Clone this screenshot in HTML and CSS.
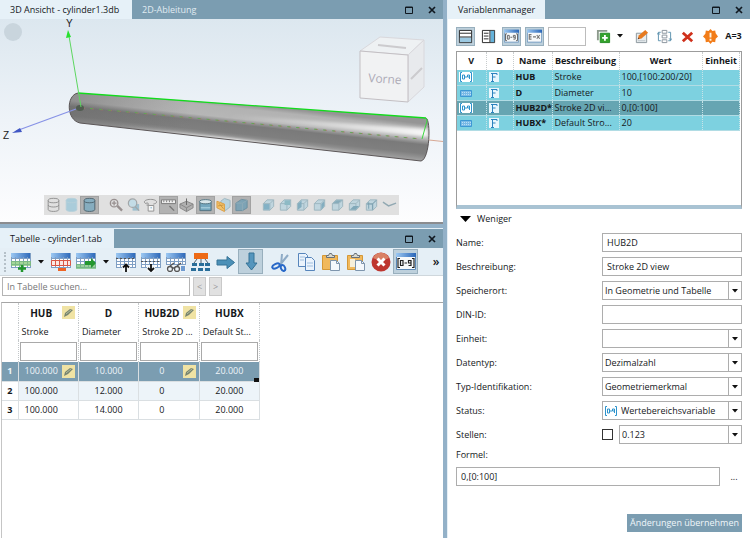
FILE: index.html
```html
<!DOCTYPE html>
<html lang="de">
<head>
<meta charset="utf-8">
<title>Variablenmanager</title>
<link rel="stylesheet" href="styles.css">
</head>
<body>
<svg class="defs" aria-hidden="true">
  <defs>
    <linearGradient id="gTab" x1="0" y1="0" x2="1" y2="0"><stop offset="0" stop-color="#9cc8f2"/><stop offset="1" stop-color="#2a66b8"/></linearGradient>
    <symbol id="grid" viewBox="0 0 20 20">
      <path fill="#fff" d="M0 1h20v15H0z"/><path fill="url(#gTab)" d="M0 1h20v5H0z"/>
      <path fill="none" stroke="#7f9fc4" d="M.5 5v11M4.5 5v11M8.5 5v11M12.5 5v11M16.5 5v11M19.5 1v15M0 6.500h20M0 9.500h20M0 12.500h20M0 15.500h20"/>
    </symbol>
    <symbol id="max" viewBox="0 0 8 8"><path fill="none" stroke="#101820" d="M.5 1h7v6.500h-7zM0 1.500h8"/></symbol>
    <symbol id="close" viewBox="0 0 8 8"><path fill="none" stroke="#101820" stroke-width="1.700" d="M1 1l6 6M7 1L1 7"/></symbol>
    <symbol id="pencil" viewBox="0 0 13 13">
      <path fill="#f0e3a4" d="M0 0h13v13H0z"/><path fill="#77846f" d="M2 11l1-4 5-4 3 1-5 5z"/><path stroke="#b5bd9c" d="M4 8l5-4"/>
    </symbol>
    <symbol id="range" viewBox="0 0 14 10">
      <path fill="#fff" d="M0 0h14v10H0z"/>
      <path fill="none" stroke="#2d93cc" d="M3 .5H1.500v9H3M11 .5h1.500v9H11M3.500 3h2v4h-2zM6 5h2M10.500 7V3h-2v2h2"/>
    </symbol>
    <symbol id="fixed" viewBox="0 0 14 10"><path fill="#79b9e6" stroke="#3d98d4" d="M1.500 2.500h11v6h-11z"/><path stroke="#b9def5" stroke-dasharray="1 1" d="M3 4.500h9M3 6.500h9"/></symbol>
    <symbol id="efix" viewBox="0 0 10 10"><path fill="#e8f6fd" d="M0 0h10v10H0z"/><path fill="none" stroke="#2c83bf" d="M2 9.500h3M3.500 9V1.500M2 1.500h6V3M3.500 5h3"/></symbol>
    <symbol id="cyl" viewBox="0 0 16 18"><path d="M2 4v10c0 3 12 3 12 0V4"/><ellipse cx="8" cy="4" rx="6" ry="2.500"/></symbol>
    <symbol id="cube" viewBox="0 0 16 16"><path fill="#bfd5de" stroke="#9db5bf" d="M2.500 6.500l4-4h7v7l-4 4h-7zM2.500 6.500h7v7M9.500 6.500l4-4"/></symbol>
    <symbol id="paste" viewBox="0 0 20 20">
      <path fill="#f1b95c" stroke="#d59836" d="M1.500 3.500h15v14h-15z"/><path fill="#d9d9cf" stroke="#66707a" d="M5.500 5.500v-2h2l1-2h2l1 2h2v2z"/>
      <path fill="#f4f8fc" stroke="#7e95ad" d="M9.500 8.500h6l3 3v7h-9z"/><path fill="none" stroke="#7e95ad" d="M15.500 8.500v3h3"/>
    </symbol>
    <symbol id="win" viewBox="0 0 20 20">
      <path fill="#f7f9fa" stroke="#5b88b7" d="M.5 1.500h19v16H.5z"/><path fill="url(#gTab)" d="M0 1h20v4H0z"/>
    </symbol>
    <symbol id="tri" viewBox="0 0 6 4"><path fill="#111" d="M0 0h6L3 3.500z"/></symbol>
  </defs>
</svg>

<div class="app">
  <div class="left">
    <section class="panel">
      <header class="tabs">
        <button class="tab on tab-3d">3D Ansicht - cylinder1.3db</button><button class="tab">2D-Ableitung</button>
        <span class="wins"><button aria-label="Maximieren"><svg><use href="#max"/></svg></button><button aria-label="Schließen"><svg><use href="#close"/></svg></button></span>
      </header>
      <div class="viewer">
        <svg class="scene" viewBox="0 19 443 203" role="img" aria-label="Zylinder">
          <defs>
            <linearGradient id="sky" x1="0" y1="0" x2="0" y2="1"><stop offset="0" stop-color="#dce7ef"/><stop offset=".5" stop-color="#eef3f8"/><stop offset="1" stop-color="#fdfdfe"/></linearGradient>
            <linearGradient id="body" gradientUnits="userSpaceOnUse" x1="250" y1="105" x2="246" y2="142">
              <stop offset="0" stop-color="#959595"/><stop offset=".12" stop-color="#b2b2b2"/><stop offset=".4" stop-color="#b6b6b6"/><stop offset=".56" stop-color="#7a7a7a"/><stop offset=".8" stop-color="#7f7f7f"/><stop offset="1" stop-color="#a2a2a2"/>
            </linearGradient>
            <linearGradient id="fade" gradientUnits="userSpaceOnUse" x1="230" y1="0" x2="427" y2="0"><stop offset="0" stop-color="#fff" stop-opacity="0"/><stop offset="1" stop-color="#fff" stop-opacity=".9"/></linearGradient>
            <linearGradient id="low" gradientUnits="userSpaceOnUse" x1="120" y1="0" x2="370" y2="0"><stop offset="0" stop-color="#fff" stop-opacity="0"/><stop offset=".45" stop-color="#fff"/><stop offset="1" stop-color="#fff" stop-opacity="0"/></linearGradient>
            <linearGradient id="end" gradientUnits="userSpaceOnUse" x1="69" y1="0" x2="190" y2="0"><stop offset="0" stop-color="#686868" stop-opacity=".5"/><stop offset="1" stop-color="#686868" stop-opacity="0"/></linearGradient>
            <filter id="soft" x="-5%" y="-30%" width="110%" height="160%"><feGaussianBlur stdDeviation="1.500"/></filter>
            <clipPath id="cyclip"><path d="M78 93C66 95 66 120 80 123L421 161C430 159 431 120 426 118z"/></clipPath>
          </defs>
          <path fill="url(#sky)" d="M0 19h443v203H0z"/>
          <circle cx="13" cy="32" r="9" fill="#c9d5dd"/>
          <g stroke="#d9d8dc" fill="#eef1f3">
            <path d="M360 51l20-14 44 3-16 15z"/><path fill="#e8eaed" d="M408 55l16-15v47l-16 15z"/><path stroke="#c3bfc3" fill="#f1f2f3" d="M360 51l48 4v47l-48-4z"/>
            <path stroke="#cccbce" stroke-width="2" d="M378 45l28 3M411 79l11-11"/>
          </g>
          <text x="368" y="82" transform="rotate(4 368 82)" class="face">Vorne</text>
          <g clip-path="url(#cyclip)">
            <path fill="url(#body)" d="M60 85h380v85H60z"/>
            <path fill="url(#end)" d="M60 85h130v60H60z"/>
            <path filter="url(#soft)" fill="url(#fade)" d="M230 115L428 129v8L230 118z"/>
            <path filter="url(#soft)" fill="url(#low)" d="M120 126L370 154v5L120 131z"/>
          </g>
          <path fill="none" stroke="#5c5758" d="M78 93C66 95 66 120 80 123L421 161C430 159 431 120 426 118"/>
          <path fill="none" stroke="#12db1c" stroke-width="1.300" d="M78 93l348 25"/><path fill="none" stroke="#3bd93f" d="M426 118l1 3-5 18"/>
          <path fill="none" stroke="#b46c64" stroke-dasharray="3 6" opacity=".7" d="M82 108l339 31"/><path fill="none" stroke="#55ae4f" stroke-dasharray="3 6" stroke-dashoffset="4" opacity=".8" d="M85 108l336 31"/>
          <path stroke="#d7a894" d="M429 140l14 1.500"/>
          <ellipse cx="80" cy="108" rx="4" ry="3" fill="#505c50"/>
          <path stroke="#5dd760" d="M81 107L69 36"/><path fill="#27e12f" d="M68 30l-2 8 5-1z"/>
          <path stroke="#8792e6" stroke-width="1.300" d="M76 109l-60 22"/><path fill="#4057c4" d="M12 133l8-5 2 4z"/>
          <text x="66" y="27" class="axis">Y</text><text x="3" y="139" class="axis">Z</text>
        </svg>
        <div class="viewbar">
          <button aria-label="Drahtmodell"><svg viewBox="0 0 16 18" fill="none" stroke="#8b8b8b"><use href="#cyl"/><path d="M2 9c0 3 12 3 12 0"/></svg></button>
          <button aria-label="Schattiert"><svg viewBox="0 0 16 18" fill="#a9ccda" stroke="#b6d0da"><use href="#cyl"/></svg></button>
          <button class="down" aria-label="Schattiert mit Kanten"><svg viewBox="0 0 16 18" fill="#86adbf" stroke="#4b5f69"><use href="#cyl"/></svg></button>
          <i></i>
          <button aria-label="Alles zoomen"><svg viewBox="0 0 16 16" fill="none" stroke="#989090" stroke-width="1.400"><circle cx="6.500" cy="6" r="4"/><path d="M4 6h5M6.500 3.500v5"/><path stroke-width="2.500" d="M10 9l5 5"/></svg></button>
          <button aria-label="Bereich zoomen"><svg viewBox="0 0 16 16" fill="#c3dce6" stroke="#a2a6a8" stroke-width="1.300"><path fill="#9dbfce" stroke="none" d="M7 7h7v7H7z"/><circle cx="7" cy="6" r="4.500"/><path d="M10 10l4 4"/></svg></button>
          <button aria-label="Drehen"><svg viewBox="0 0 16 16" fill="#f7f7f7" stroke="#8f8f8f"><path fill="none" d="M5 7C-1 6 1 2 8 2s9 4 3 5M4 5l2 2-2 2"/><path d="M5.500 8.500h6v6h-6z"/><path stroke="#6ca7c9" d="M8 11h1.500"/></svg></button>
          <button class="down" aria-label="Messen"><svg viewBox="0 0 16 16" fill="#eee" stroke="#777"><path d="M.5 2.500h15v4H.5zM3 3v2M6 3v2M9 3v2M12 3v2"/><path stroke-width="1.500" d="M9 9l5 5"/></svg></button>
          <button aria-label="Schnitt"><svg viewBox="0 0 16 16" fill="#b0b0b0" stroke="#858585"><path d="M1 7l7-3 7 3v4l-7 4-7-4z"/><path fill="none" d="M1 7l7 4 7-4M8 11v4"/><path d="M8 1v7" stroke="#666"/></svg></button>
          <button class="down" aria-label="Maße"><svg viewBox="0 0 16 16" fill="#75a8bf" stroke="#51717f"><path d="M2 5h12v9H2z"/><path fill="#d8e6ea" d="M1.500 4.500c0-3 13-3 13 0s-13 3-13 0"/><path fill="none" stroke="#b9dce8" d="M3 11h10"/></svg></button>
          <button aria-label="Textur"><svg viewBox="0 0 16 16" fill="#b8d3de" stroke="#9db5bf"><path d="M5 4l4-3 6 2v7l-5 4z"/><path fill="#f2c168" stroke="#db9d43" d="M1 4l8 3v8l-8-4z"/><path stroke="#c9943f" d="M2 9l6-1M3 6l5 6"/></svg></button>
          <button class="down" aria-label="Körper"><svg viewBox="0 0 16 16" fill="#7da3b5" stroke="#6c8f9f"><path d="M2 6l6-4 6 1v8l-5 3H2z"/><path fill="none" stroke="#8eabb8" d="M2 6h7l5-3M9 6v8"/></svg></button>
          <i></i>
          <button aria-label="Ansicht vorne"><svg viewBox="0 0 16 16"><use href="#cube"/><path fill="#83b1c5" d="M3 7h6v6H3z"/></svg></button>
          <button aria-label="Ansicht hinten"><svg viewBox="0 0 16 16"><use href="#cube"/><path fill="#8dbac5" d="M7 3h6v5H7z"/></svg></button>
          <button aria-label="Ansicht links"><svg viewBox="0 0 16 16"><use href="#cube"/><path fill="#83adbf" d="M3 7l4-4v7l-4 3z"/></svg></button>
          <button aria-label="Ansicht rechts"><svg viewBox="0 0 16 16"><use href="#cube"/><path fill="#83adbf" d="M10 7l3-3v5l-3 4z"/></svg></button>
          <button aria-label="Ansicht oben"><svg viewBox="0 0 16 16"><use href="#cube"/><path fill="#87acbb" d="M3 6l4-3h6L9 6z"/></svg></button>
          <button aria-label="Ansicht unten"><svg viewBox="0 0 16 16"><use href="#cube"/><path fill="#80a8b9" d="M3 13l4-4h6l-4 4z"/></svg></button>
          <button aria-label="Isometrie"><svg viewBox="0 0 16 16"><use href="#cube"/><path fill="none" stroke="#7a9fb0" d="M3 7h6v6M9 7l4-4M5 5v7"/></svg></button>
          <button aria-label="Mehr"><svg viewBox="0 0 16 16" fill="none" stroke="#91a8b2" stroke-width="1.500"><path d="M1 5l6 4 8-3"/></svg></button>
        </div>
      </div>
    </section>

    <section class="panel tablepanel">
      <header class="tabs">
        <button class="tab on tab-table">Tabelle - cylinder1.tab</button>
        <span class="wins"><button aria-label="Maximieren"><svg><use href="#max"/></svg></button><button aria-label="Schließen"><svg><use href="#close"/></svg></button></span>
      </header>
      <div class="bar">
        <span class="grip"></span>
        <button aria-label="Zeile hinzufügen"><svg viewBox="0 0 20 20"><use href="#grid"/><path fill="#7cc56c" opacity=".7" d="M0 9h20v5H0z"/><path fill="none" stroke="#23962e" stroke-width="2.500" d="M11 13v7M7 16.500h8"/></svg></button>
        <button class="drop" aria-label="Weitere"><svg><use href="#tri"/></svg></button>
        <button aria-label="Zeile löschen"><svg viewBox="0 0 20 20"><use href="#grid"/><path fill="#fbe9e4" stroke="#d95745" d="M.5 8.500h19v5H.5zM4.500 9v4M8.500 9v4M12.500 9v4M16.500 9v4"/><path stroke="#ef6423" stroke-width="3" d="M7 17.500h8"/></svg></button>
        <button aria-label="Zeile kopieren"><svg viewBox="0 0 20 20"><use href="#grid"/><path fill="#6fbd71" opacity=".7" d="M0 12h20v5H0z"/><path fill="#23962e" d="M9 9h6V6l5 5-5 5v-3H9z"/></svg></button>
        <button class="drop" aria-label="Weitere"><svg><use href="#tri"/></svg></button>
        <button aria-label="Zeile nach oben"><svg viewBox="0 0 20 20"><use href="#grid"/><path fill="#f2f7fa" d="M6 13h8v7H6z"/><path stroke="#555" stroke-dasharray="2 2" d="M0 6.500h20"/><path fill="none" stroke="#111" stroke-width="1.800" d="M10 20v-7M7 15.500l3-3 3 3"/></svg></button>
        <button aria-label="Zeile nach unten"><svg viewBox="0 0 20 20"><use href="#grid"/><path fill="#f2f7fa" d="M6 13h8v7H6z"/><path stroke="#555" stroke-dasharray="2 2" d="M0 9.500h20"/><path fill="none" stroke="#111" stroke-width="1.800" d="M10 12v7M7 16l3 3 3-3"/></svg></button>
        <button aria-label="Ansehen"><svg viewBox="0 0 20 20"><use href="#grid"/><path fill="#eef4f8" d="M0 13h20v7H0z"/><g fill="none" stroke="#555" stroke-width="1.300"><circle cx="4" cy="17" r="2.500"/><circle cx="11" cy="17" r="2.500"/><path d="M4 14l4-3M11 14l4-3M6 16h3"/></g><path fill="#6f9bd0" d="M15 14h4v5h-4z"/></svg></button>
        <button aria-label="Struktur"><svg viewBox="0 0 20 20"><path fill="#ed6a16" d="M3 1h14v6H3z"/><path fill="none" stroke="#52616c" d="M10 7v4M6 7l-3 4M14 7l3 4"/><path fill="#286d99" d="M1 11h5v3H1zM8 11h5v3H8zM14 11h5v3h-5zM0 16h5v3H0zM7 16h5v3H7zM14 16h5v3h-5z"/></svg></button>
        <button aria-label="Nach rechts"><svg viewBox="0 0 20 20"><path fill="#4c90b7" stroke="#347296" d="M1 8h10V4.500l7.500 6-7.500 6V13H1z"/></svg></button>
        <button class="down" aria-label="Nach unten"><svg viewBox="0 0 20 20"><path fill="#5495bd" stroke="#347296" d="M8 1h5v10h3L10.500 18 5 11h3z"/></svg></button>
        <i></i>
        <button aria-label="Ausschneiden"><svg viewBox="0 0 20 20"><path stroke="#8eabc6" stroke-width="2" d="M11 2l-1 11M17 3L8 14"/><g fill="none" stroke="#2868c8" stroke-width="2"><ellipse cx="5" cy="14" rx="4" ry="2" transform="rotate(-25 5 14)"/><ellipse cx="12" cy="16" rx="2" ry="3" transform="rotate(-25 12 16)"/></g></svg></button>
        <button aria-label="Kopieren"><svg viewBox="0 0 20 20" fill="#eaf3fc" stroke="#5785bb"><path d="M2.500 1.500h7l2 2v11h-9z"/><path d="M9.500 5.500h6l3 3v10h-9z"/><path stroke="#a0bfde" d="M4 5h5M4 8h4M11 11h6M11 14h6"/></svg></button>
        <button aria-label="Einfügen"><svg><use href="#paste"/></svg></button>
        <button aria-label="Einfügen als"><svg viewBox="0 0 20 20"><use href="#paste"/><path fill="#f6efda" d="M4 7h5v8H4z"/></svg></button>
        <button aria-label="Löschen"><svg viewBox="0 0 20 20"><circle cx="10" cy="10" r="9.500" fill="#be3630"/><path fill="#d98165" d="M2 6C5-1 15-1 18 6c-4 2-12 2-16 0"/><path stroke="#fff" stroke-width="3" d="M6.500 6.500l7 7M13.500 6.500l-7 7"/></svg></button>
        <button class="down" aria-label="Wertebereich"><svg viewBox="0 0 20 20"><use href="#win"/><path fill="none" stroke="#222" stroke-width="1.200" d="M4 6.500H2v9h2M16 6.500h2v9h-2M4.500 8.500H7v5H4.500zM8.500 11h2.500M12.500 13.500H15v-5h-2.500V11H15"/></svg></button>
        <button class="more" aria-label="Mehr">»</button>
      </div>
      <div class="search"><input type="text" aria-label="In Tabelle suchen" placeholder="In Tabelle suchen..."><button>&lt;</button><button>&gt;</button></div>
      <div class="sheet">
        <table class="data">
          <thead>
            <tr><th></th><th class="pen">HUB<svg><use href="#pencil"/></svg></th><th>D</th><th class="pen">HUB2D<svg><use href="#pencil"/></svg></th><th>HUBX</th></tr>
            <tr class="desc"><td></td><td>Stroke</td><td>Diameter</td><td>Stroke 2D ...</td><td>Default St...</td></tr>
            <tr class="filter"><td></td><td><input type="text" aria-label="Filter HUB"></td><td><input type="text" aria-label="Filter D"></td><td><input type="text" aria-label="Filter HUB2D"></td><td><input type="text" aria-label="Filter HUBX"></td></tr>
          </thead>
          <tbody>
            <tr class="sel"><th>1</th><td class="pen">100.000<svg><use href="#pencil"/></svg></td><td>10.000</td><td class="pen">0<svg><use href="#pencil"/></svg></td><td class="cursor">20.000</td></tr>
            <tr class="alt"><th>2</th><td class="pen">100.000</td><td>12.000</td><td class="pen">0</td><td>20.000</td></tr>
            <tr><th>3</th><td class="pen">100.000</td><td>14.000</td><td class="pen">0</td><td>20.000</td></tr>
          </tbody>
        </table>
      </div>
    </section>
  </div>

  <section class="panel right">
    <header class="tabs">
      <button class="tab on tab-var">Variablenmanager</button>
      <span class="wins"><button aria-label="Maximieren"><svg><use href="#max"/></svg></button><button aria-label="Schließen"><svg><use href="#close"/></svg></button></span>
    </header>
    <div class="manager">
      <div class="varbar">
        <button class="down" aria-label="Geteilt horizontal"><svg viewBox="0 0 16 16"><path fill="#fff" stroke="#222" d="M1.500 1.500h13v13h-13z"/><path fill="#9cc9e2" d="M2 9h12v5H2z"/><path stroke="#222" d="M2 4.500h12M2 8.500h12"/></svg></button>
        <button aria-label="Geteilt vertikal"><svg viewBox="0 0 16 16"><path fill="#fff" stroke="#222" d="M1.500 1.500h13v13h-13z"/><path fill="#65b2da" d="M10 2h4v12h-4z"/><path stroke="#222" d="M9.500 2v12M3 4.500h5M3 7.500h5M3 10.500h5"/></svg></button>
        <button class="down" aria-label="Wertebereich"><svg viewBox="0 0 20 20"><use href="#win"/><path fill="none" stroke="#666" stroke-width="1.300" d="M4 6.500H2v9h2M16 6.500h2v9h-2M4.500 8.500H7v5H4.500zM8.500 11h2.500M12.500 13.500H15v-5h-2.500V11H15"/></svg></button>
        <button class="down" aria-label="Ausdruck"><svg viewBox="0 0 20 20"><use href="#win"/><path fill="none" stroke="#777" stroke-width="1.500" d="M6 7.500H3v6h3M3 10.500h3M8 10.500h4M13 8l4 5M17 8l-4 5"/></svg></button>
        <input type="text" aria-label="Filter">
        <button class="add" aria-label="Variable hinzufügen"><svg viewBox="0 0 16 16"><path fill="none" stroke="#8d9a8d" stroke-width="2" d="M2 12V2h10"/><path fill="#35a32b" stroke="#238a24" d="M4.500 4.500h10v10h-10z"/><path stroke="#fff" stroke-width="2" d="M9.500 6.500v6M6.500 9.500h6"/></svg></button>
        <button class="drop" aria-label="Weitere"><svg><use href="#tri"/></svg></button>
        <button aria-label="Bearbeiten"><svg viewBox="0 0 16 16"><path fill="#e8edef" stroke="#89949b" d="M2.500 4.500h11v10h-11z"/><path stroke="#bac3c8" d="M4 12.500h8"/><path fill="#e67a20" d="M4 11l1-4 7-6 3 3-7 6z"/><path fill="#544" d="M4 11l.5-2 1.500 1.500z"/></svg></button>
        <button aria-label="Umbenennen"><svg viewBox="0 0 16 16" fill="none" stroke="#5c91ae"><path d="M4 3.500H1.500v9H4M12 3.500h2.500v9H12M0 6l1.500-2L3 6M13 10l1.500 2 1.500-2"/><path stroke="#87919b" d="M5.500 1.500h5v3h-5zM5.500 6.500h5v3h-5zM5.500 11.500h5v3h-5z"/></svg></button>
        <button aria-label="Löschen"><svg viewBox="0 0 16 16" fill="none" stroke="#cf301b" stroke-width="3"><path d="M3 4l10 9M13 4L3 13"/></svg></button>
        <button aria-label="Prüfen"><svg viewBox="0 0 16 16"><path fill="#f27c18" d="M8 0l2 2 3-.5.5 3L16 8l-2.500 2.500-.5 3.500-3-.5L8 16l-2-2.500-3 .5-.5-3.500L0 8l2.500-3L3 1.500 6 2z"/><path stroke="#fff3df" stroke-width="2" d="M8 4v5M8 10.500v2"/></svg></button>
        <button class="txt">A=3</button>
      </div>
      <div class="varlist">
        <table class="vars">
          <colgroup><col class="cv"><col class="cd"><col class="cn"><col class="cb"><col class="cw"><col class="ce"></colgroup>
          <thead><tr><th>V</th><th>D</th><th>Name</th><th>Beschreibung</th><th>Wert</th><th>Einheit</th></tr></thead>
          <tbody>
            <tr><td><svg class="i14"><use href="#range"/></svg></td><td><svg class="i10"><use href="#efix"/></svg></td><th>HUB</th><td>Stroke</td><td>100,[100:200/20]</td><td></td></tr>
            <tr><td><svg class="i14"><use href="#fixed"/></svg></td><td><svg class="i10"><use href="#efix"/></svg></td><th>D</th><td>Diameter</td><td>10</td><td></td></tr>
            <tr class="sel"><td><svg class="i14"><use href="#range"/></svg></td><td><svg class="i10"><use href="#efix"/></svg></td><th>HUB2D*</th><td>Stroke 2D vi...</td><td>0,[0:100]</td><td></td></tr>
            <tr><td><svg class="i14"><use href="#fixed"/></svg></td><td><svg class="i10"><use href="#efix"/></svg></td><th>HUBX*</th><td>Default Stro...</td><td>20</td><td></td></tr>
          </tbody>
        </table>
      </div>
      <button class="less"><svg viewBox="0 0 11 6"><path d="M0 0h11L5.500 6z"/></svg>Weniger</button>
      <form class="form">
        <label for="f1">Name:</label><input id="f1" type="text" value="HUB2D">
        <label for="f2">Beschreibung:</label><input id="f2" type="text" value="Stroke 2D view">
        <label for="f3">Speicherort:</label><span class="combo"><select id="f3"><option>In Geometrie und Tabelle</option></select><svg><use href="#tri"/></svg></span>
        <label for="f4">DIN-ID:</label><input id="f4" type="text">
        <label for="f5">Einheit:</label><span class="combo"><select id="f5"><option></option></select><svg><use href="#tri"/></svg></span>
        <label for="f6">Datentyp:</label><span class="combo"><select id="f6"><option>Dezimalzahl</option></select><svg><use href="#tri"/></svg></span>
        <label for="f7">Typ-Identifikation:</label><span class="combo"><select id="f7"><option>Geometriemerkmal</option></select><svg><use href="#tri"/></svg></span>
        <label for="f8">Status:</label><span class="combo"><svg class="lead"><use href="#range"/></svg><select id="f8"><option>Wertebereichsvariable</option></select><svg><use href="#tri"/></svg></span>
        <label for="f9">Stellen:</label><span class="pair"><input type="checkbox" aria-label="Stellen aktiv"><span class="combo"><select id="f9"><option>0.123</option></select><svg><use href="#tri"/></svg></span></span>
      </form>
      <label class="flabel" for="f10">Formel:</label>
      <div class="formula"><input id="f10" type="text" value="0,[0:100]"><button aria-label="Formel bearbeiten">...</button></div>
      <button class="apply">Änderungen übernehmen</button>
    </div>
  </section>
</div>
</body>
</html>
```
FILE: styles.css
```css
* { box-sizing: border-box; }
body { margin: 0; background: #fff; color: #15181b; font: 9px/14px "Open Sans", "Noto Sans", sans-serif; }
button, input, select { font: inherit; color: inherit; margin: 0; padding: 0; border: 0; border-radius: 0; background: none; }
svg { display: block; }
.defs { position: absolute; width: 0; height: 0; }

.app { display: grid; grid-template-columns: 443fr 303fr; column-gap: 4px; min-height: 100vh; background: #93b1c8; }
.left { display: flex; flex-direction: column; gap: 4px; min-width: 0; }
.panel { display: flex; flex-direction: column; min-width: 0; background: #fff; }
.tablepanel { flex: 1; border-top: 1px solid #e5eff6; }

.tabs { display: flex; height: 19px; background: #7b9db1; color: #e0ebf2; }
.tab { padding: 0 10px; text-align: left; white-space: nowrap; }
.tab.on { background: #e6f1f8; color: #15181b; }
.tab-3d { width: 132px; }
.tab-table { width: 114px; }
.tab-var { width: 97px; }
.wins { display: flex; gap: 15px; margin-left: auto; padding-right: 7px; align-items: center; }
.wins svg { width: 8px; height: 8px; }

.viewer { position: relative; border-bottom: 2px solid #8b8c8f; }
.scene { width: 100%; height: auto; }
.face { font-size: 12px; fill: #aeabb7; }
.axis { font: 10px "Liberation Sans", sans-serif; fill: #222; }
.viewbar { position: absolute; left: 10%; right: 10%; bottom: 7px; height: 20px; padding: 1px; display: flex; background: #e0e0e0; }
.viewbar button { flex: 1; display: grid; place-items: center; }
.viewbar svg { width: 15px; height: 16px; }
.viewbar .down { background: #b2b2b2; border: 1px solid #a2a2a2; }
.viewbar i { width: 8px; }

.bar { display: flex; align-items: center; height: 28px; background: #e5eff6; border-bottom: 1px solid #cfd7dc; }
.grip { width: 2px; height: 20px; margin: 0 2px 0 4px; border-left: 2px dotted #b5c0c8; }
.bar button { width: 25px; height: 25px; display: grid; place-items: center; flex: none; }
.bar svg { width: 20px; height: 20px; }
.bar i { width: 5px; }
.bar .drop { width: 15px; }
.bar .drop svg, .varbar .drop svg { width: 6px; height: 4px; }
.bar .down, .varbar .down { background: #bdd0dc; border: 1px solid #98afbd; }
.bar .more { width: 12px; margin: 0 1px 0 auto; font-size: 12px; font-weight: 600; }

.search { display: flex; gap: 3px; padding: 1px 2px 6px; }
.search input { width: 188px; height: 19px; padding: 0 4px; border: 1px solid #b4b4b4; }
.search input::placeholder { color: #777; opacity: 1; }
.search button { width: 13px; height: 19px; background: #e1e1e1; border: 1px solid #c9c9c9; color: #999; line-height: 12px; }

.sheet { flex: 1; margin-left: 1px; border-top: 1px solid #a5a5a5; border-left: 1px solid #c5c5c5; }
.data { table-layout: fixed; width: 258px; border-collapse: collapse; }
.data th, .data td { height: 19px; padding: 0; text-align: center; position: relative; border-right: 1px solid #dadfe2; border-bottom: 1px solid #dadfe2; }
.data thead th, .data thead td { border-bottom: 0; border-right: 1px dotted #c4c8ca; }
.data tr > :first-child { width: 16px; }
.data tr > .pen { padding-right: 14px; }
.data .pen svg { position: absolute; right: 3px; top: 3px; width: 13px; height: 13px; }
.data thead th { height: 20px; font-size: 10px; }
.data .desc td { height: 17px; text-align: left; padding-left: 3px; white-space: nowrap; }
.data .filter td { height: 22px; padding: 1px; }
.data .filter input { width: 100%; height: 19px; border: 1px solid #a9a9a9; background: #fff; display: block; }
.data .sel { background: #7b9db1; color: #eef4f8; }
.data .alt td { background: #edf4f9; }
.cursor::after { content: ""; position: absolute; right: 0; bottom: -2px; width: 5px; height: 5px; background: #111; }

.right { border-left: 1px solid #e5eff6; }
.manager { flex: 1; padding: 7px 8px; display: flex; flex-direction: column; }
.varbar { display: flex; align-items: center; height: 20px; gap: 4px; }
.varbar button { width: 19px; height: 19px; display: grid; place-items: center; flex: none; }
.varbar svg { width: 15px; height: 15px; }
.varbar input { width: 38px; height: 19px; border: 1px solid #bcbcbc; }
.varbar .add { margin: 0 -4px 0 4px; }
.varbar .drop { width: 14px; margin-right: 1px; }
.varbar .txt { margin-left: auto; font-weight: 700; }

.varlist { height: 158px; margin-top: 5px; border: 1px solid #9c9c9c; border-bottom: 4px solid #a9c3d3; }
.vars { table-layout: fixed; width: calc(100% - 1px); border-collapse: collapse; }
.cv { width: 29px; } .cd { width: 27px; } .cn { width: 39px; } .cb { width: 67px; } .ce { width: 37px; }
.vars th, .vars td { padding: 0 2px; height: 15px; line-height: 12px; text-align: left; white-space: nowrap; }
.vars thead th { height: 18px; text-align: center; padding: 0; border-right: 1px dotted #c8cccd; }
.vars tbody tr { background: #7dd1e0; border-bottom: 1px solid #b1dce4; }
.vars tbody th, .vars tbody td { border-right: 1px dotted #c7e4e8; }
.vars tbody .sel { background: #66a5b2; }
.i14 { width: 14px; height: 10px; }
.i10 { width: 10px; height: 10px; }

.less { display: flex; align-items: center; gap: 6px; padding-left: 4px; height: 19px; align-self: flex-start; }
.less svg { width: 11px; height: 6px; }
.form { display: grid; grid-template-columns: 73fr 70fr; row-gap: 5px; align-items: center; margin-top: 5px; }
.form > *:not(label), .combo { height: 19px; min-width: 0; width: 100%; }
.form > input, .formula input { border: 1px solid #adadad; padding: 0 4px; }
.combo { position: relative; display: flex; align-items: center; border: 1px solid #adadad; }
.combo select { appearance: none; flex: 1; min-width: 0; height: 100%; padding-left: 2px; }
.combo > svg:last-child { position: absolute; right: 3px; width: 6px; height: 4px; pointer-events: none; }
.combo::after { content: ""; position: absolute; right: 12px; top: 0; bottom: 0; border-left: 1px solid #adadad; }
.combo .lead { width: 14px; height: 10px; margin: 0 1px; }
.pair { display: flex; align-items: center; gap: 6px; }
.pair input { appearance: none; flex: none; width: 11px; height: 11px; border: 1px solid #333; }
.flabel { margin-top: 4px; }
.formula { display: flex; gap: 6px; margin-top: 5px; }
.formula input { flex: 1; min-width: 0; height: 19px; }
.formula button { width: 16px; }
.apply { align-self: flex-end; width: 115px; height: 18px; margin-top: 28px; background: #7b9db1; color: #f0f6fa; white-space: nowrap; }
```
